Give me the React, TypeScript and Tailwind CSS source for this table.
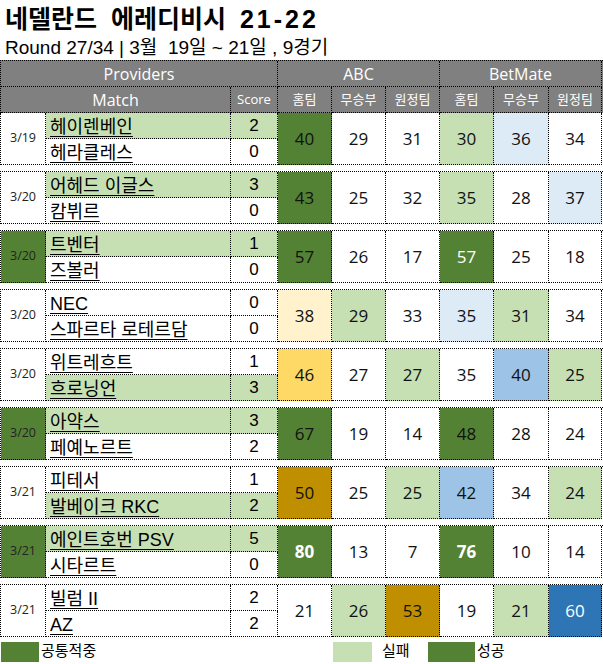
const LG = "bg-[#c6e0b4]";
const DG = "bg-[#548235]";
const LB = "bg-[#ddebf7]";
const MB = "bg-[#9dc3e6]";
const DB = "bg-[#2e75b6]";
const LY = "bg-[#fff2cc]";
const YY = "bg-[#ffd966]";
const GD = "bg-[#bf8f00]";

type Stat = [number, string?, string?];

type Game = {
  date: string;
  dateWin?: boolean;
  home: string;
  hs: number;
  away: string;
  as: number;
  hw?: boolean;
  aw?: boolean;
  stats: Stat[];
};

const games: Game[] = [
  {
    date: "3/19", home: "헤이렌베인", hs: 2, away: "헤라클레스", as: 0, hw: true,
    stats: [[40, DG], [29], [31], [30, LG], [36, LB], [34]],
  },
  {
    date: "3/20", home: "어헤드 이글스", hs: 3, away: "캄뷔르", as: 0, hw: true,
    stats: [[43, DG], [25], [32], [35, LG], [28], [37, LB]],
  },
  {
    date: "3/20", dateWin: true, home: "트벤터", hs: 1, away: "즈볼러", as: 0, hw: true,
    stats: [[57, DG], [26], [17], [57, DG, "text-white"], [25], [18]],
  },
  {
    date: "3/20", home: "NEC", hs: 0, away: "스파르타 로테르담", as: 0,
    stats: [[38, LY], [29, LG], [33], [35, LB], [31, LG], [34]],
  },
  {
    date: "3/20", home: "위트레흐트", hs: 1, away: "흐로닝언", as: 3, aw: true,
    stats: [[46, YY], [27], [27, LG], [35], [40, MB], [25, LG]],
  },
  {
    date: "3/20", dateWin: true, home: "아약스", hs: 3, away: "페예노르트", as: 2, hw: true,
    stats: [[67, DG], [19], [14], [48, DG], [28], [24]],
  },
  {
    date: "3/21", home: "피테서", hs: 1, away: "발베이크 RKC", as: 2, aw: true,
    stats: [[50, GD], [25], [25, LG], [42, MB], [34], [24, LG]],
  },
  {
    date: "3/21", dateWin: true, home: "에인트호번 PSV", hs: 5, away: "시타르트", as: 0, hw: true,
    stats: [[80, DG, "text-white font-bold"], [13], [7], [76, DG, "text-white font-bold"], [10], [14]],
  },
  {
    date: "3/21", home: "빌럼 II", hs: 2, away: "AZ", as: 2,
    stats: [[21], [26, LG], [53, GD], [19], [21, LG], [60, DB, "text-white"]],
  },
];

const cols = "grid grid-cols-[45px_185px_47px_54px_54px_54px_54px_55px_53px] grid-rows-[26px_26px]";
const cell = "border-r border-b border-dotted border-black";
const ui = { fontFamily: '"Open Sans", "Noto Sans CJK KR", sans-serif' };
const kr = { fontFamily: '"Liberation Sans", "Noto Sans CJK KR", sans-serif' };

function Header() {
  const sub = ["홈팀", "무승부", "원정팀", "홈팀", "무승부", "원정팀"];
  return (
    <div className={`${cols} border-l border-t border-dotted border-black bg-[#808080] text-white`} style={ui}>
      <div className={`${cell} col-span-3 flex items-center justify-center text-[16px]`}>Providers</div>
      <div className={`${cell} col-span-3 flex items-center justify-center text-[16px]`}>ABC</div>
      <div className={`${cell} col-span-3 flex items-center justify-center text-[16px]`}>BetMate</div>
      <div className={`${cell} col-span-2 flex items-center justify-center text-[16px]`}>Match</div>
      <div className={`${cell} flex items-center justify-center text-[13px]`}>Score</div>
      {sub.map((s, i) => (
        <div key={i} className={`${cell} flex items-center justify-center text-[13px]`}>
          {s}
        </div>
      ))}
    </div>
  );
}

function Block({ g, first }: { g: Game; first: boolean }) {
  return (
    <div
      className={`${cols} border-l border-dotted border-black ${first ? "" : "mt-[6px] border-t"}`}
    >
      <div
        className={`${cell} row-span-2 flex items-center justify-center text-[12.5px] text-[#222] ${g.dateWin ? DG : ""}`}
        style={ui}
      >
        {g.date}
      </div>
      <div className={`${cell} flex items-end pl-[4px] text-[18px] leading-[22px] ${g.hw ? LG : ""}`} style={kr}>
        <span className="underline underline-offset-[3px]">{g.home}</span>
      </div>
      <div className={`${cell} flex items-center justify-center text-[17px] ${g.hw ? LG : ""}`} style={kr}>
        {g.hs}
      </div>
      {g.stats.map(([v, bg, fg], i) => (
        <div
          key={i}
          className={`${cell} row-span-2 flex items-center justify-center text-[17px] ${bg ?? ""} ${fg ?? "text-[#111]"}`}
          style={ui}
        >
          {v}
        </div>
      ))}
      <div className={`${cell} flex items-end pl-[4px] text-[18px] leading-[22px] ${g.aw ? LG : ""}`} style={kr}>
        <span className="underline underline-offset-[3px]">{g.away}</span>
      </div>
      <div className={`${cell} flex items-center justify-center text-[17px] ${g.aw ? LG : ""}`} style={kr}>
        {g.as}
      </div>
    </div>
  );
}

export default function App() {
  return (
    <div className="h-[664px] w-[603px] overflow-hidden bg-white text-black">
      <div className="pt-[2px]" style={kr}>
        <div className="h-[34px] whitespace-pre pl-[5px] text-[25px] leading-[34px] font-bold [word-spacing:7px]">
          네델란드 에레디비시 <span className="tracking-[3px]">21-22</span>
        </div>
        <div className="h-[24px] whitespace-pre pl-[5px] text-[19px] leading-[24px]">
          Round 27/34 | 3월  19일 ~ 21일 , 9경기
        </div>
      </div>
      <Header />
      {games.map((g, i) => (
        <Block key={i} g={g} first={i === 0} />
      ))}
      <div className="mt-[4px] flex h-[21px] items-center text-[15px]" style={kr}>
        <div className="flex w-[333px] items-center">
          <div className={`ml-[1px] h-[20px] w-[38px] ${DG}`} />
          <span className="ml-[2px]">공통적중</span>
        </div>
        <div className="flex w-[95px] items-center">
          <div className={`h-[20px] w-[39px] ${LG}`} />
          <span className="ml-[10px]">실패</span>
        </div>
        <div className={`h-[20px] w-[47px] ${DG}`} />
        <span className="ml-[2px]">성공</span>
      </div>
    </div>
  );
}
